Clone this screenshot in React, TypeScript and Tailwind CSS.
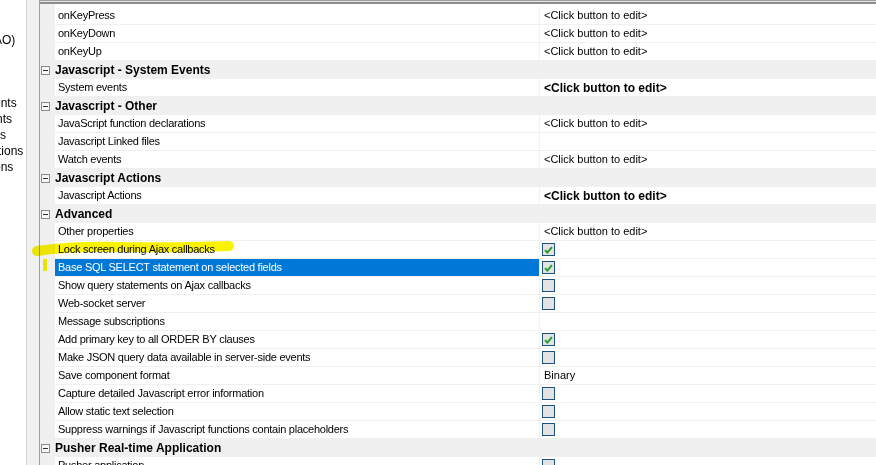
import React from "react";

type Row =
  | { kind: "group"; label: string }
  | {
      kind: "prop";
      label: string;
      value?: string;
      bold?: boolean;
      check?: boolean;
      selected?: boolean;
    };

const rows: Row[] = [
  { kind: "prop", label: "onKeyPress", value: "<Click button to edit>" },
  { kind: "prop", label: "onKeyDown", value: "<Click button to edit>" },
  { kind: "prop", label: "onKeyUp", value: "<Click button to edit>" },
  { kind: "group", label: "Javascript - System Events" },
  { kind: "prop", label: "System events", value: "<Click button to edit>", bold: true },
  { kind: "group", label: "Javascript - Other" },
  { kind: "prop", label: "JavaScript function declarations", value: "<Click button to edit>" },
  { kind: "prop", label: "Javascript Linked files" },
  { kind: "prop", label: "Watch events", value: "<Click button to edit>" },
  { kind: "group", label: "Javascript Actions" },
  { kind: "prop", label: "Javascript Actions", value: "<Click button to edit>", bold: true },
  { kind: "group", label: "Advanced" },
  { kind: "prop", label: "Other properties", value: "<Click button to edit>" },
  { kind: "prop", label: "Lock screen during Ajax callbacks", check: true },
  { kind: "prop", label: "Base SQL SELECT statement on selected fields", check: true, selected: true },
  { kind: "prop", label: "Show query statements on Ajax callbacks", check: false },
  { kind: "prop", label: "Web-socket server", check: false },
  { kind: "prop", label: "Message subscriptions" },
  { kind: "prop", label: "Add primary key to all ORDER BY clauses", check: true },
  { kind: "prop", label: "Make JSON query data available in server-side events", check: false },
  { kind: "prop", label: "Save component format", value: "Binary" },
  { kind: "prop", label: "Capture detailed Javascript error information", check: false },
  { kind: "prop", label: "Allow static text selection", check: false },
  { kind: "prop", label: "Suppress warnings if Javascript functions contain placeholders", check: false },
  { kind: "group", label: "Pusher Real-time Application" },
  { kind: "prop", label: "Pusher application", check: false },
];

function CheckBox({ checked }: { checked: boolean }) {
  return (
    <span className="w-[13px] h-[13px] border border-[#1c5180] bg-[#e3e3e3] flex items-center justify-center">
      {checked && (
        <svg width="9" height="8" viewBox="0 0 9 8">
          <path d="M1 4.2 L3.4 6.5 L8 1.2" fill="none" stroke="#2a9f2a" strokeWidth="2" />
        </svg>
      )}
    </span>
  );
}

function Minus() {
  return (
    <span className="w-[9px] h-[9px] border border-[#8c8c8c] bg-[#f8f8f8] flex items-center justify-center">
      <span className="w-[5px] h-px bg-[#333]" />
    </span>
  );
}

export default function App() {
  return (
    <div className="relative w-[876px] h-[465px] overflow-hidden flex bg-[#f0f0f0] text-[11px] text-black font-['Liberation_Sans',Arial,sans-serif]">
      {/* clipped tree on the left */}
      <div className="w-[27px] shrink-0 bg-white border-r border-[#d4d4d4] overflow-hidden text-[12px] leading-4 whitespace-nowrap">
        <div className="pt-[32px] h-4 box-content ml-[-6px]">AO)</div>
        <div className="mt-[47px] ml-[-6px]">ents</div>
        <div className="ml-[-4px]">nts</div>
        <div>s</div>
        <div className="ml-[-2px]">tions</div>
        <div className="ml-[-6px]">ons</div>
      </div>

      <div className="w-[12px] shrink-0" />

      {/* property grid */}
      <div className="flex-1 flex flex-col border-l border-[#a0a0a0] bg-[#f0f0f0] min-w-0">
        <div className="h-[7px] shrink-0 border-t border-[#a0a0a0] flex flex-col">
          <div className="h-px bg-[#e3e3e3]" />
          <div className="h-[2px] bg-[#8d8d8d]" />
          <div className="flex-1 flex">
            <div className="w-[15px]" />
            <div className="flex-1 bg-white" />
          </div>
        </div>

        {rows.map((r, i) =>
          r.kind === "group" ? (
            <div key={i} className="h-[18px] shrink-0 flex items-center bg-[#f0f0f0]">
              <div className="w-[15px] pl-[1px] flex items-center">
                <Minus />
              </div>
              <span className="font-bold text-[12px]">{r.label}</span>
            </div>
          ) : (
            <div key={i} className="h-[18px] shrink-0 flex">
              <div className="w-[15px] shrink-0" />
              <div
                className={
                  r.selected
                    ? "w-[485px] shrink-0 flex items-center pl-[3px] tracking-[-0.25px] bg-[#0078d7] text-white border-b border-r border-[#f0f0f0] whitespace-nowrap overflow-hidden"
                    : "w-[485px] shrink-0 flex items-center pl-[3px] tracking-[-0.25px] bg-white border-b border-r border-[#f0f0f0] whitespace-nowrap overflow-hidden"
                }
              >
                {r.label}
              </div>
              <div className="flex-1 flex items-center pl-[2px] bg-white border-b border-[#f0f0f0] whitespace-nowrap">
                {r.check !== undefined ? (
                  <CheckBox checked={r.check} />
                ) : r.value ? (
                  <span className={r.bold ? "pl-[2px] font-bold text-[12px]" : "pl-[2px]"}>{r.value}</span>
                ) : null}
              </div>
            </div>
          )
        )}
      </div>

      {/* highlighter marks drawn over the screenshot */}
      <svg
        className="absolute inset-0 pointer-events-none mix-blend-multiply"
        width="876"
        height="465"
        viewBox="0 0 876 465"
      >
        <path
          d="M37 251 Q 70 246 120 247 T 229 246"
          fill="none"
          stroke="#fbf200"
          strokeWidth="10"
          strokeLinecap="round"
        />
        <rect x="43" y="259" width="4" height="12" fill="#fbf200" />
      </svg>
    </div>
  );
}
